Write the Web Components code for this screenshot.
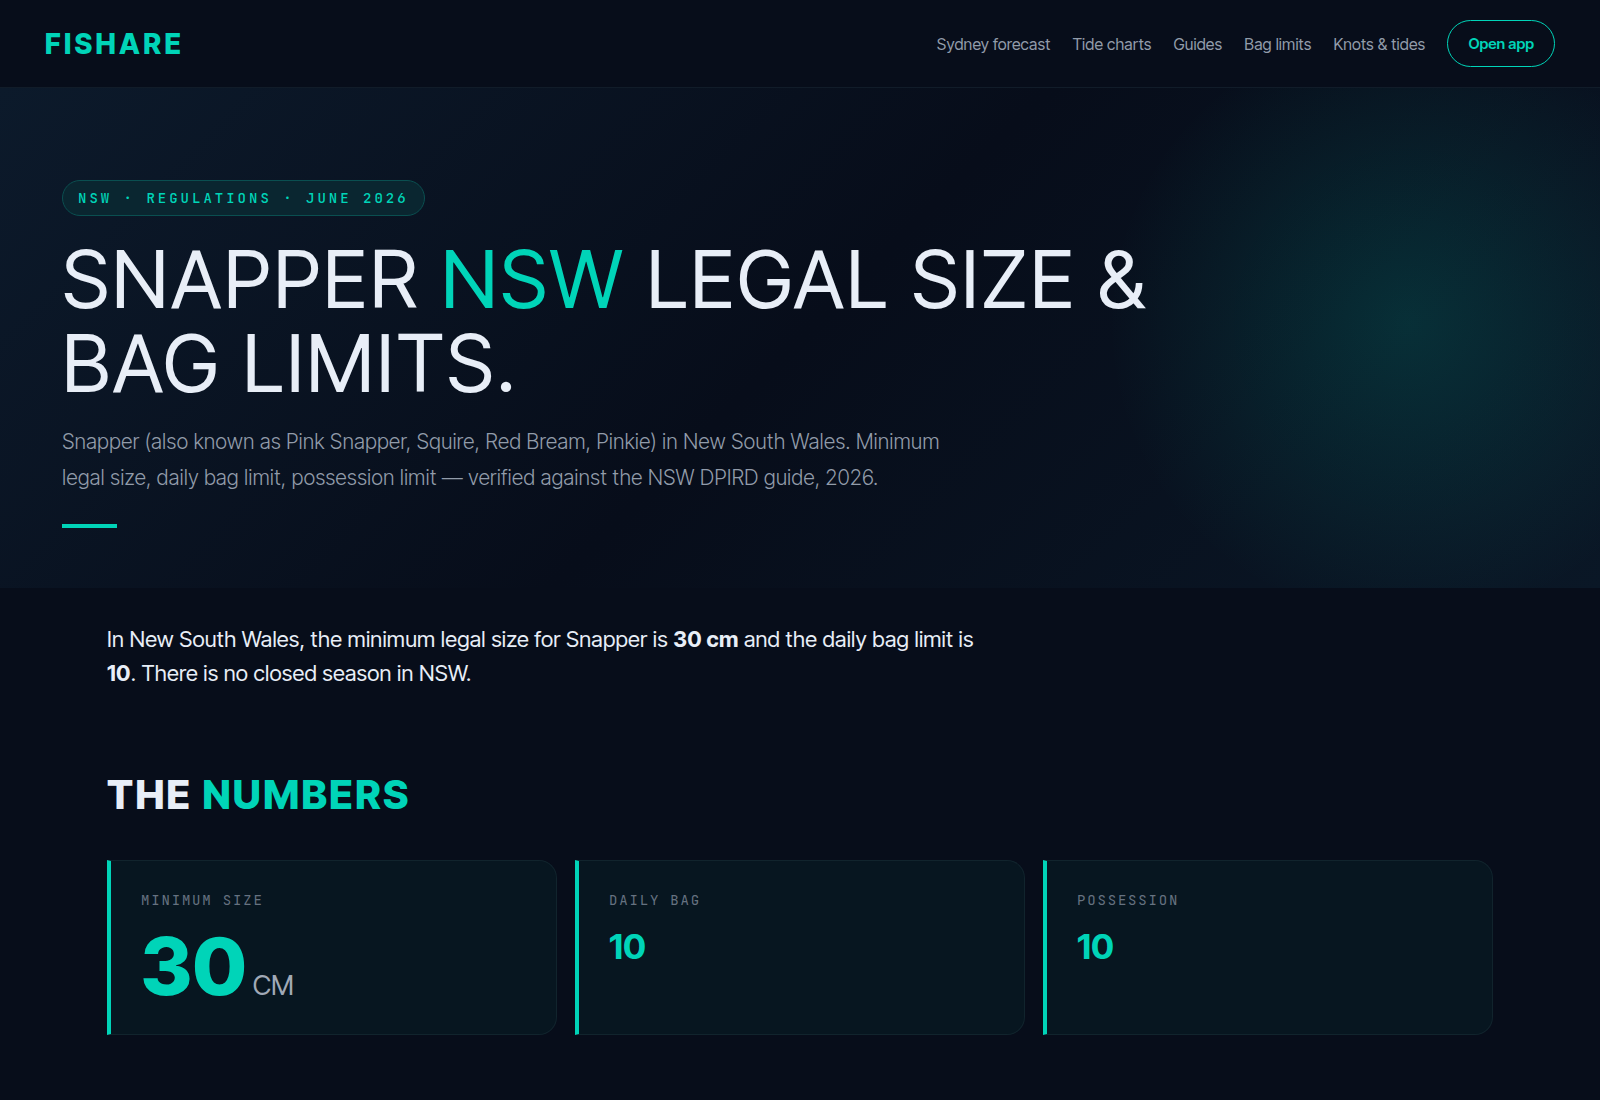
<!DOCTYPE html>
<html lang="en">
<head>
<meta charset="utf-8">
<meta name="viewport" content="width=device-width, initial-scale=1">
<title>Snapper NSW legal size &amp; bag limits</title>
<style>
:root{--bg:#070d1a;--accent:#00d4b8;--text:#e8eef7;--muted:#929caa;--dim:#667280;--sans:"Inter Tight",Inter,sans-serif;--mono:"JetBrains Mono","DejaVu Sans Mono",monospace}
body{margin:0;background:var(--bg);color:var(--text);font-family:var(--sans)}
main{display:block}
</style>
</head>
<body>
<site-header>
  <nav-link href="#forecast">Sydney forecast</nav-link>
  <nav-link href="#tides">Tide charts</nav-link>
  <nav-link href="#guides">Guides</nav-link>
  <nav-link href="#limits">Bag limits</nav-link>
  <nav-link href="#knots">Knots &amp; tides</nav-link>
</site-header>
<main>
<page-hero>
  <span slot="tag">NSW · REGULATIONS · JUNE 2026</span>
  <span slot="title">SNAPPER <accent-text>NSW</accent-text> LEGAL SIZE &amp; BAG LIMITS.</span>
  <span slot="intro">Snapper (also known as Pink Snapper, Squire, Red Bream, Pinkie) in New South Wales. Minimum legal size, daily bag limit, possession limit — verified against the NSW DPIRD guide, 2026.</span>
</page-hero>
<content-section>
  <span slot="lead">In New South Wales, the minimum legal size for Snapper is <b>30 cm</b> and the daily bag limit is <b>10</b>. There is no closed season in NSW.</span>
  <span slot="heading">THE <accent-text>NUMBERS</accent-text></span>
  <stat-card label="MINIMUM SIZE" unit="CM" large>30</stat-card>
  <stat-card label="DAILY BAG">10</stat-card>
  <stat-card label="POSSESSION">10</stat-card>
</content-section>
</main>
<script>
const define = (name, render) => customElements.define(name, class extends HTMLElement {
  connectedCallback() {
    if (!this.shadowRoot) this.attachShadow({ mode: 'open' }).innerHTML = render(this);
  }
});

define('accent-text', () => `<style>:host{color:var(--accent)}</style><slot></slot>`);

define('nav-link', el => `
<style>:host{display:block}
a{color:var(--muted);text-decoration:none;font-size:16px;line-height:24px;letter-spacing:0.01em;white-space:nowrap}</style>
<a href="${el.getAttribute('href')}"><slot></slot></a>`);

define('site-header', () => `
<style>
:host{display:block;border-bottom:1px solid #111c29}
header{display:flex;align-items:center;justify-content:space-between;padding:20px 45px}
.logo{color:var(--accent);text-decoration:none;font-size:28px;line-height:34px;font-weight:800;letter-spacing:0.12em}
nav{display:flex;align-items:center;gap:22px}
button{box-sizing:border-box;height:47px;padding:0 20px;border:1px solid var(--accent);border-radius:24px;background:none;color:var(--accent);font:600 15px/24px var(--sans)}
</style>
<header><a class="logo" href="#">FISHARE</a><nav><slot></slot><button type="button">Open app</button></nav></header>`);

define('page-hero', () => `
<style>
:host{display:block;background:radial-gradient(circle 300px at 88% 47%,rgba(0,212,184,.15),transparent),linear-gradient(135deg,#0c1a2b 0%,#070d1a 50%,#0a1726 100%)}
section{padding:92px 62px 60px}
.tag{display:inline-block;border:1px solid #0a4f50;border-radius:18px;background:#0a2630;color:var(--accent);padding:0 15px;font-family:var(--mono);font-size:14px;font-weight:500;line-height:34px;letter-spacing:3px}
h1{margin:21px 0 0;max-width:1150px;font-size:80px;line-height:84px;font-weight:400;letter-spacing:0.032em}
p{margin:19px 0 0;max-width:900px;color:var(--muted);font-size:21px;line-height:36px;font-weight:300}
.rule{width:55px;height:4px;margin-top:28px;background:var(--accent)}
.row{display:flex}
</style>
<section><div class="row"><span class="tag"><slot name="tag"></slot></span></div>
<h1><slot name="title"></slot></h1><p><slot name="intro"></slot></p><div class="rule"></div></section>`);

define('content-section', () => `
<style>
:host{display:block;padding:34px 107px 65px}
p{margin:0;max-width:880px;font-size:22px;line-height:34px;letter-spacing:0.01em}
h2{margin:81px 0 0;font-size:40px;line-height:48px;font-weight:800;letter-spacing:0.06em}
.cards{display:grid;grid-template-columns:repeat(3,1fr);gap:18px;margin-top:41px}
</style>
<section><p><slot name="lead"></slot></p><h2><slot name="heading"></slot></h2><div class="cards"><slot></slot></div></section>`);

define('stat-card', el => `
<style>
:host{display:block;box-sizing:border-box;border:1px solid #11242d;border-left:4px solid var(--accent);border-radius:0 18px 18px 0;background:#071620;padding:28px 30px 27px}
.label{color:var(--dim);font-family:var(--mono);font-size:14px;line-height:22px;letter-spacing:0.13em}
.value{display:flex;align-items:baseline;gap:6px;margin-top:14px;color:var(--accent);font-size:35px;line-height:42px;font-weight:700}
:host([large]) .value{font-size:80px;line-height:82px;font-weight:800}
.unit{color:#a0a9b6;font-size:27px;line-height:34px;font-weight:400}
</style>
<div class="label">${el.getAttribute('label')}</div>
<div class="value"><span><slot></slot></span>${el.hasAttribute('unit') ? `<span class="unit">${el.getAttribute('unit')}</span>` : ''}</div>`);
</script>
</body>
</html>
